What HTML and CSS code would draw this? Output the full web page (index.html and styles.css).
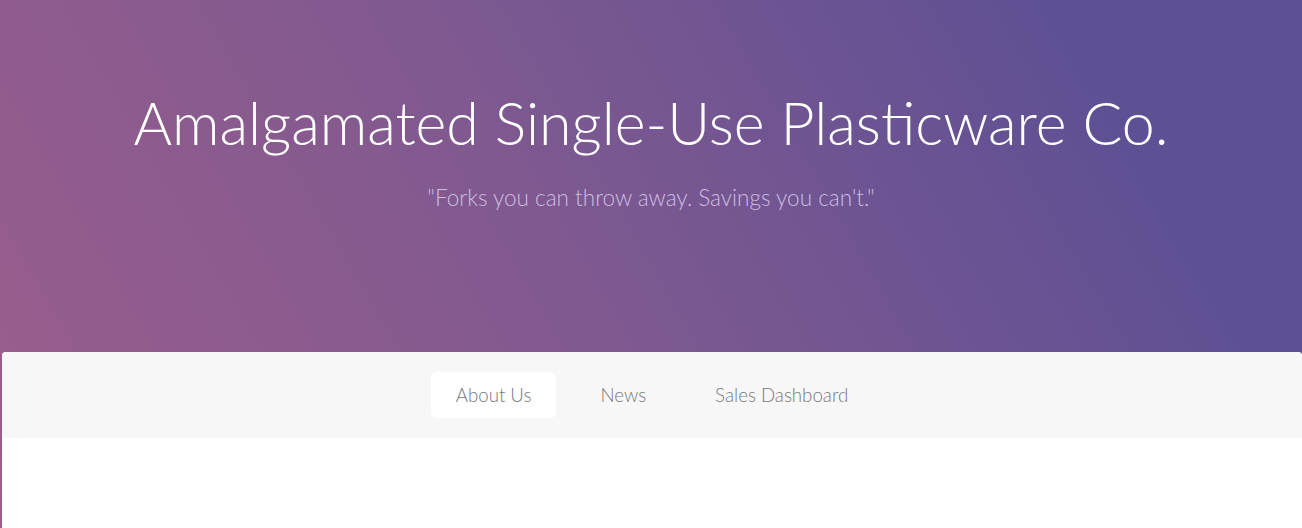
FILE: index.html
```html
<!DOCTYPE html>
<html><head><meta charset="UTF-8">
    <title>Amalgamated Single-Use Plasticware Co.</title>
    <link rel="stylesheet" href="styles.css">
  </head>
  <body>
    <header class="hero">
      <h1 class="hero-title">Amalgamated Single-Use Plasticware Co.</h1>
      <p class="hero-tagline">"Forks you can throw away. Savings you can't."</p>
    </header>

    <main class="card">
      <nav class="tabs">
        <a href="#" class="tab active">About Us</a>
        <a href="#" class="tab">News</a>
        <a href="#" class="tab">Sales Dashboard</a>
      </nav>
      <div class="card-body"></div>
    </main>
  </body></html>
```
FILE: styles.css
```css
html, body {
  height: 100%;
}

body {
  margin: 0;
  font-family: Lato, "Open Sans", sans-serif;
  font-weight: 300;
  background: linear-gradient(60deg, #9c5e8c 0%, #7f5990 45%, #5e5094 85%, #5d5093 100%);
  background-attachment: fixed;
  overflow: hidden;
}

.hero {
  height: 352px;
  box-sizing: border-box;
  padding-top: 84px;
  text-align: center;
  color: #fff;
}

.hero-title {
  margin: 0;
  font-size: 59px;
  font-weight: 300;
  line-height: 78px;
}

.hero-tagline {
  margin: 22px 0 0;
  font-size: 22.5px;
  color: #cdbde0;
}

.card {
  margin-left: 2px;
  background-color: #fff;
  border-radius: 4px 4px 0 0;
  height: 176px;
  overflow: hidden;
}

.tabs {
  display: flex;
  justify-content: center;
  gap: 19px;
  padding: 20px 0;
  background-color: #f7f7f7;
}

.tab {
  padding: 0 25px;
  line-height: 46px;
  font-size: 18.7px;
  color: #777;
  text-decoration: none;
  border-radius: 6px;
}

.tab.active {
  background-color: #fff;
}
```
